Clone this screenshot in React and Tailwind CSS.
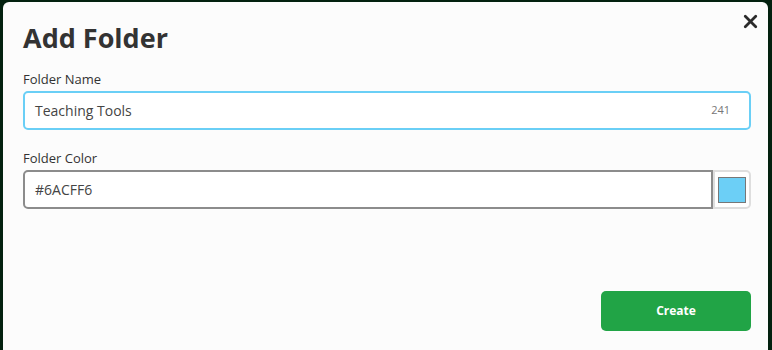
import { X } from 'lucide-react';

export default function App() {
  return (
    <div className="h-[350px] w-full overflow-hidden bg-[#03210f] pt-[2px] pl-[3px] pr-[4px]" style={{ fontFamily: '"Open Sans", sans-serif' }}>
      <div className="relative h-[360px] rounded-t-[6px] bg-[#fcfcfc] pl-[20px] pr-[17px] pt-[18px]">
        <button className="absolute right-[7px] top-[9px] text-[#2b2b2b]" aria-label="Close">
          <X className="h-[21px] w-[21px]" strokeWidth={3.2} />
        </button>
        <h1 className="text-[27px] font-bold leading-[36px] text-[#333]">Add Folder</h1>

        <label className="mt-[14px] block text-[13px] leading-[18px] text-[#333]">Folder Name</label>
        <div className="mt-[3px] flex h-[39px] items-center rounded-[5px] border-2 border-[#6acff6] bg-white pl-[10px] pr-[19px]">
          <span className="flex-1 text-[14px] text-[#444]">Teaching Tools</span>
          <span className="text-[11px] text-[#777]">241</span>
        </div>

        <label className="mt-[19px] block text-[13px] leading-[18px] text-[#333]">Folder Color</label>
        <div className="mt-[3px] flex h-[39px]">
          <div className="flex flex-1 items-center rounded-l-[5px] border-2 border-[#8c8c8c] bg-white pl-[10px] text-[14px] text-[#444]">
            #6ACFF6
          </div>
          <div className="flex w-[38px] items-center justify-center rounded-r-[5px] border-2 border-[#dedede] bg-white">
            <div className="h-[26px] w-[28px] border border-[#777] bg-[#6ccff6]" />
          </div>
        </div>

        <div className="mt-[82px] flex justify-end">
          <button className="h-[40px] w-[150px] rounded-[5px] bg-[#21a446] text-[12px] font-bold text-white">Create</button>
        </div>
      </div>
    </div>
  );
}
